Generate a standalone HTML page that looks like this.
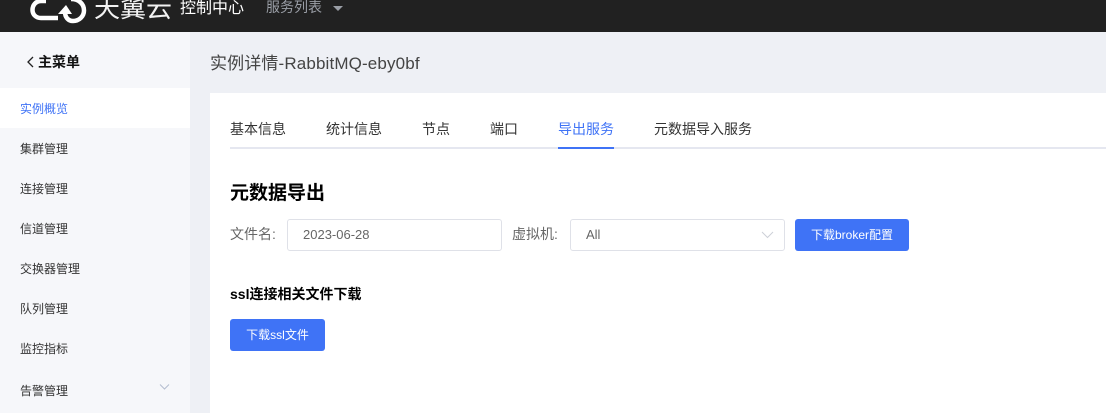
<!DOCTYPE html>
<html lang="zh">
<head>
<meta charset="utf-8">
<style>
*{margin:0;padding:0;box-sizing:border-box}
html,body{width:1106px;height:413px;overflow:hidden;background:#eef0f5;font-family:"Liberation Sans","Noto Sans CJK SC",sans-serif}
.a{position:absolute;white-space:nowrap}
#top{position:absolute;left:0;top:0;width:1106px;height:32px;background:#212121;overflow:hidden}
#side{position:absolute;left:0;top:32px;width:190px;height:381px;background:#f6f7fa}
#act{position:absolute;left:0;top:88px;width:190px;height:40px;background:#fff}
#card{position:absolute;left:210px;top:93px;width:896px;height:320px;background:#fff}
.m{font-size:12px;line-height:16px;color:#333;left:20px}
.t{font-size:14px;line-height:18px;color:#333;top:120px}
.inp{position:absolute;top:219px;height:32px;background:#fff;border:1px solid #dfe1e8;border-radius:3px;font-size:13px;line-height:29px;color:#666;padding-left:15px}
.btn{position:absolute;background:#3f73f6;border-radius:3px;color:#fff;font-size:12px;text-align:center;height:32px;line-height:32px}
.lab{font-size:14px;line-height:18px;color:#666;top:225px}
</style>
</head>
<body>
<div id="top">
<svg class="a" style="left:0;top:0" width="90" height="32" viewBox="0 0 90 32" fill="none" stroke="#fff" stroke-width="4.500">
<path d="M46 1H41C36 1 32.500 5 32.500 10C32.500 14.500 36 18 41 18H58"/>
<path d="M71 -1C79 -1 84 4 84 10.500C84 16.500 79 21 73 21C68 21 65 17 65 12"/>
<path d="M58 14L66 5L72 14Z" fill="#fff" stroke="none"/>
</svg>
<div class="a" style="left:94px;top:-8px;font-size:26px;line-height:32px;color:#f2f2f2;font-weight:400">天翼云</div>
<div class="a" style="left:180px;top:0;font-size:16px;line-height:17px;color:#fff">控制中心</div>
<div class="a" style="left:266px;top:-2px;font-size:14px;line-height:18px;color:#9a9ea6">服务列表</div>
<div class="a" style="left:333px;top:6px;width:0;height:0;border-left:5px solid transparent;border-right:5px solid transparent;border-top:5px solid #9a9ea6"></div>
</div>

<div id="side"></div>
<div id="act"></div>
<svg class="a" style="left:26px;top:56px" width="9" height="12" viewBox="0 0 9 12" fill="none" stroke="#222" stroke-width="1.300"><path d="M7 1L2 6L7 11"/></svg>
<div class="a" style="left:38px;top:54px;font-size:14px;line-height:16px;color:#111;font-weight:700">主菜单</div>
<div class="a m" style="top:101px;color:#3f73f6">实例概览</div>
<div class="a m" style="top:141px">集群管理</div>
<div class="a m" style="top:181px">连接管理</div>
<div class="a m" style="top:221px">信道管理</div>
<div class="a m" style="top:261px">交换器管理</div>
<div class="a m" style="top:301px">队列管理</div>
<div class="a m" style="top:341px">监控指标</div>
<div class="a m" style="top:383px">告警管理</div>
<svg class="a" style="left:159px;top:383px" width="11" height="8" viewBox="0 0 11 8" fill="none" stroke="#b4bdcf" stroke-width="1"><path d="M1 1.500L5.500 6L10 1.500"/></svg>

<div class="a" style="left:210px;top:53px;font-size:17px;line-height:22px;color:#444;letter-spacing:.14px">实例详情-RabbitMQ-eby0bf</div>

<div id="card"></div>
<div class="a t" style="left:230px">基本信息</div>
<div class="a t" style="left:326px">统计信息</div>
<div class="a t" style="left:422px">节点</div>
<div class="a t" style="left:490px">端口</div>
<div class="a t" style="left:558px;color:#3f73f6">导出服务</div>
<div class="a t" style="left:654px">元数据导入服务</div>
<div class="a" style="left:230px;top:147px;width:876px;height:2px;background:#e5e7f0"></div>
<div class="a" style="left:558px;top:147px;width:56px;height:2px;background:#3f73f6"></div>

<div class="a" style="left:230px;top:182px;font-size:19px;line-height:24px;color:#000;font-weight:700">元数据导出</div>
<div class="a lab" style="left:230px">文件名:</div>
<div class="inp" style="left:287px;width:215px">2023-06-28</div>
<div class="a lab" style="left:512px">虚拟机:</div>
<div class="inp" style="left:570px;width:215px">All</div>
<svg class="a" style="left:761px;top:231px" width="13" height="8" viewBox="0 0 13 8" fill="none" stroke="#cdd0d8" stroke-width="1"><path d="M1 1L6.500 6.500L12 1"/></svg>
<div class="btn" style="left:795px;top:219px;width:114px">下载broker配置</div>

<div class="a" style="left:230px;top:286px;font-size:14px;line-height:16px;color:#000;font-weight:700">ssl连接相关文件下载</div>
<div class="btn" style="left:230px;top:319px;width:95px">下载ssl文件</div>
</body>
</html>
